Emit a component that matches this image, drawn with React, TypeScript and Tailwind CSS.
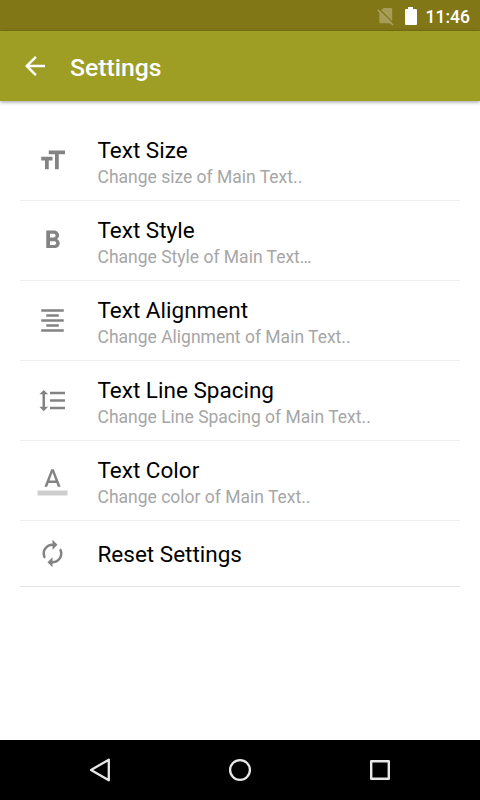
import React from "react";

const icons = {
  size: "M9 4v3h5v12h3V7h5V4H9zm-6 8h3v7h3v-7h3V9H3v3z",
  bold: "M15.6 10.79c.97-.67 1.65-1.77 1.65-2.79 0-2.26-1.75-4-4-4H7v14h7.04c2.09 0 3.71-1.7 3.71-3.79 0-1.52-.86-2.82-2.15-3.42zM10 6.5h3c.83 0 1.5.67 1.5 1.5s-.67 1.5-1.5 1.5h-3v-3zm3.5 9H10v-3h3.5c.83 0 1.5.67 1.5 1.5s-.67 1.5-1.5 1.5z",
  align: "M7 15v2h10v-2H7zm-4 6h18v-2H3v2zm0-8h18v-2H3v2zm4-6v2h10V7H7zM3 3v2h18V3H3z",
  spacing: "M6 7h2.5L5 3.5 1.5 7H4v10H1.5L5 20.5 8.5 17H6V7zm4-2v2h12V5H10zm0 14h12v-2H10v2zm0-6h12v-2H10v2z",
  color: "M11 3L5.5 17h2.25l1.12-3h6.25l1.12 3h2.25L13 3h-2zm-1.38 9L12 5.67 14.38 12H9.62z",
  reset: "M12 6v3l4-4-4-4v3c-4.42 0-8 3.58-8 8 0 1.57.46 3.03 1.24 4.26L6.7 14.8c-.45-.83-.7-1.79-.7-2.8 0-3.31 2.69-6 6-6zm6.76 1.74L17.3 9.2c.44.84.7 1.79.7 2.8 0 3.31-2.69 6-6 6v-3l-4 4 4 4v-3c4.42 0 8-3.58 8-8 0-1.57-.46-3.03-1.24-4.26z",
};

type IconName = keyof typeof icons;

const items: { icon: IconName; title: string; note: string }[] = [
  { icon: "size", title: "Text Size", note: "Change size of Main Text.." },
  { icon: "bold", title: "Text Style", note: "Change Style of Main Text…" },
  { icon: "align", title: "Text Alignment", note: "Change Alignment of Main Text.." },
  { icon: "spacing", title: "Text Line Spacing", note: "Change Line Spacing of Main Text.." },
  { icon: "color", title: "Text Color", note: "Change color of Main Text.." },
];

function RowIcon({ name }: { name: IconName }) {
  return (
    <svg viewBox="0.4 -0.4 24 24" className="ml-[18px] size-[30px] shrink-0 overflow-visible fill-[#838383]">
      {name === "color" && <path d="M0 20h24v4H0z" className="fill-[#cecece]" />}
      <path d={icons[name]} />
    </svg>
  );
}

function StatusBar() {
  return (
    <div className="flex h-[31px] items-center justify-end bg-[#827717] pr-2.5 text-white">
      <svg viewBox="0 0 18 20" className="mr-[9px] h-5 w-[18px]">
        <path d="M6.5 2H14q1.2 0 1.2 1.2V16q0 1.2-1.2 1.2H3.5q-1.2 0-1.2-1.2V6.2z" fill="#a69c58" />
        <path d="M1.8 2.8l14 14" stroke="#827717" strokeWidth="1.4" />
        <path d="M.7 3.7l15.3 15.3" stroke="#aaa063" strokeWidth="1.5" />
      </svg>
      <svg viewBox="0 0 14 20" className="mr-2 h-5 w-3.5">
        <path d="M4 1h5v2h3q1 0 1 1v14q0 1-1 1H2q-1 0-1-1V4q0-1 1-1h2z" fill="white" />
      </svg>
      <span className="mt-0.5 text-[17.5px] leading-5 font-medium">11:46</span>
    </div>
  );
}

function NavBar() {
  return (
    <nav className="flex h-[60px] items-center justify-center gap-[110px] bg-black">
      <svg viewBox="0 0 30 30" className="size-[30px]" fill="none" stroke="#e8e8e8" strokeWidth="2.3">
        <path d="M23.8 4.7v20.6L6 15z" strokeLinejoin="round" />
      </svg>
      <svg viewBox="0 0 30 30" className="size-[30px]" fill="none" stroke="#e8e8e8" strokeWidth="2.3">
        <circle cx="15" cy="15" r="9.9" />
      </svg>
      <svg viewBox="0 0 30 30" className="size-[30px]" fill="none" stroke="#e8e8e8" strokeWidth="2.4">
        <rect x="6.2" y="6.2" width="17.6" height="17.6" strokeLinejoin="round" />
      </svg>
    </nav>
  );
}

export default function App() {
  return (
    <div className="flex h-[800px] w-[480px] flex-col overflow-hidden bg-white font-['Roboto',sans-serif]">
      <StatusBar />
      <header className="flex h-[70px] items-center bg-[#9e9d24] pl-5 text-white shadow-[0_1px_4px_rgba(0,0,0,0.4)]">
        <svg viewBox="0 0 24 24" className="size-[30px] fill-white">
          <path d="M20 11H7.83l5.59-5.59L12 4l-8 8 8 8 1.41-1.41L7.83 13H20v-2z" />
        </svg>
        <h1 className="mt-1 ml-5 text-[24.75px] leading-[30px] font-medium">Settings</h1>
      </header>
      <main className="flex-1 px-5 pt-5">
        {items.map((item) => (
          <div key={item.title} className="flex h-20 border-b border-[#eeeeee]">
            <div className="pt-6">
              <RowIcon name={item.icon} />
            </div>
            <div className="ml-[29.5px] pt-4">
              <div className="text-[22.5px] leading-[27px] text-black">{item.title}</div>
              <div className="mt-0.5 text-[17.5px] leading-[22px] text-[#a6a6a6]">{item.note}</div>
            </div>
          </div>
        ))}
        <div className="flex h-[66px] border-b border-[#e4e4e4]">
          <div className="pt-[17px]">
            <RowIcon name="reset" />
          </div>
          <div className="ml-[29.5px] pt-5 text-[22.5px] leading-[27px] text-black">Reset Settings</div>
        </div>
      </main>
      <NavBar />
    </div>
  );
}
